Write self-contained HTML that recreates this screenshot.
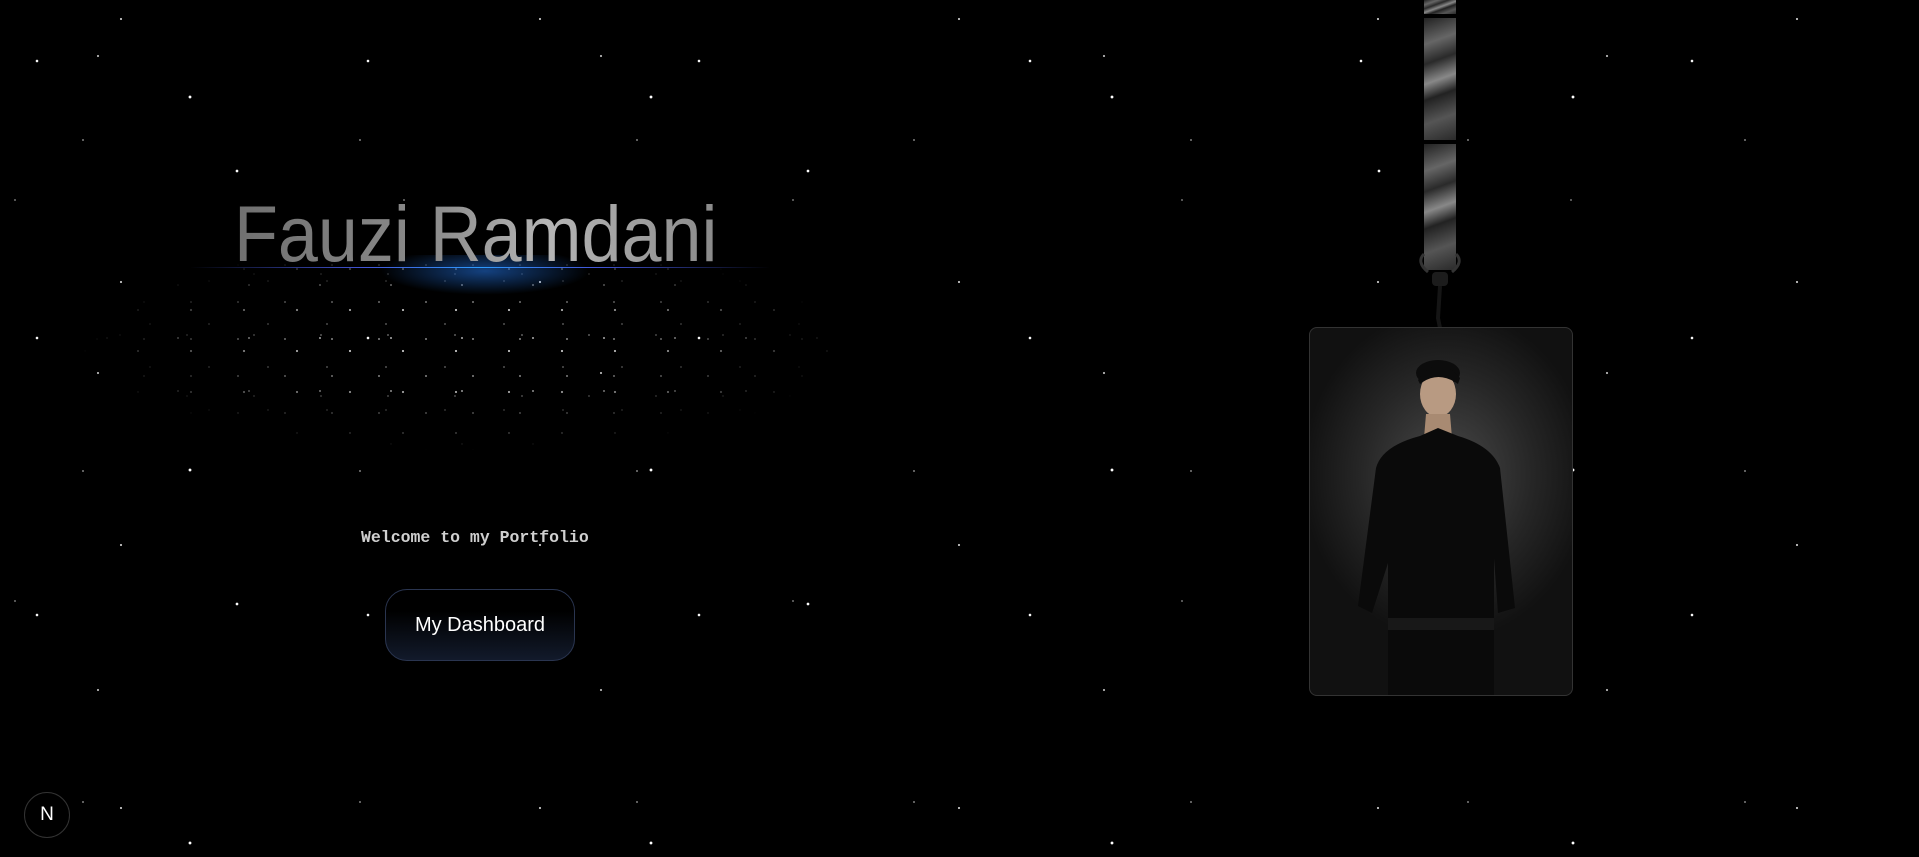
<!DOCTYPE html>
<html><head><meta charset="utf-8"><style>
html,body{margin:0;padding:0;width:1919px;height:857px;background:#000;overflow:hidden;position:relative;font-family:"Liberation Sans",sans-serif}
.stars{position:absolute;inset:0;
background-image:
radial-gradient(1.6px 1.6px at 37px 61px,#fff 60%,transparent),
radial-gradient(1.3px 1.3px at 121px 19px,#ccc 60%,transparent),
radial-gradient(1.1px 1.1px at 83px 140px,#999 60%,transparent),
radial-gradient(1.8px 1.8px at 190px 97px,#fff 60%,transparent),
radial-gradient(1.1px 1.1px at 15px 200px,#888 60%,transparent);
background-size:331px 277px,419px 263px,277px 331px,461px 373px,389px 401px;}
.stars2{position:absolute;inset:0;
background-image:
radial-gradient(1.3px 1.3px at 57px 33px,#bbb 60%,transparent),
radial-gradient(1.7px 1.7px at 140px 120px,#fff 60%,transparent);
background-size:503px 317px,571px 433px;background-position:41px 23px,97px 51px}
.cloud{position:absolute;left:80px;top:262px;width:770px;height:210px;
background-image:
radial-gradient(1.3px 1.3px at 5px 7px,#fff 60%,transparent),
radial-gradient(1.1px 1.1px at 17px 3px,#ccc 60%,transparent),
radial-gradient(1px 1px at 11px 19px,#999 60%,transparent),
radial-gradient(1.2px 1.2px at 27px 23px,#ddd 60%,transparent),
radial-gradient(1px 1px at 40px 12px,#aaa 60%,transparent);
background-size:53px 41px,47px 37px,59px 43px,71px 53px,67px 61px;
-webkit-mask-image:radial-gradient(ellipse 50% 50% at 50% 40%,#000 35%,transparent 100%);
mask-image:radial-gradient(ellipse 50% 50% at 50% 40%,#000 35%,transparent 100%);opacity:.8}
.title{position:absolute;left:234px;top:188px;font-size:79px;white-space:nowrap;transform:scaleX(.91);transform-origin:left top;
background:linear-gradient(90deg,#707070 0%,#8a8a8a 40%,#b5b5b5 65%,#8a8a8a 100%);-webkit-background-clip:text;background-clip:text;-webkit-text-fill-color:transparent}
.line{position:absolute;left:190px;top:267px;width:580px;height:1px;background:linear-gradient(90deg,transparent,#4355d8 30%,#2d9bff 50%,#4355d8 70%,transparent)}
.glow{position:absolute;left:380px;top:255px;width:210px;height:40px;background:radial-gradient(ellipse at 50% 40%,rgba(40,130,255,.5),transparent 70%)}
.welcome{position:absolute;left:361px;top:528px;font-family:"Liberation Mono",monospace;font-weight:bold;font-size:16.5px;color:#cfcfcf}
.btn{position:absolute;left:385px;top:589px;width:188px;height:70px;border:1px solid #2a3550;border-radius:22px;background:linear-gradient(180deg,#000 30%,#121a2b 100%);color:#fff;font-size:20px;display:flex;align-items:center;justify-content:center}
.n{position:absolute;left:24px;top:792px;width:44px;height:44px;border-radius:50%;border:1.5px solid #333;background:#000;color:#fff;display:flex;align-items:center;justify-content:center;font-size:19px}
.strap{position:absolute;left:1424px;width:32px;background:linear-gradient(160deg,#222 0%,#666 20%,#2a2a2a 35%,#888 50%,#222 62%,#555 80%,#2a2a2a 100%)}
.card{position:absolute;left:1309px;top:327px;width:262px;height:367px;border-radius:8px;border:1px solid #333;overflow:hidden;
background:radial-gradient(ellipse 55% 45% at 52% 40%,#4a4a4a 0%,#262626 60%,#111 100%)}
</style></head><body>
<div class="stars"></div><div class="stars2"></div>
<div class="cloud"></div>
<div class="glow"></div>
<div class="title">Fauzi Ramdani</div>
<div class="line"></div>
<div class="welcome">Welcome to my Portfolio</div>
<div class="btn">My Dashboard</div>
<div class="n">N</div>
<div class="strap" style="top:0;height:14px"></div>
<div class="strap" style="top:18px;height:122px"></div>
<div class="strap" style="top:144px;height:126px"></div>
<svg style="position:absolute;left:1410px;top:248px" width="60" height="120">
<path d="M18 24 Q6 14 14 6 M42 24 Q54 14 46 6" stroke="#333" stroke-width="3" fill="none"/>
<rect x="22" y="24" width="16" height="14" rx="4" fill="#1c1c1c"/>
<path d="M30 38 L28 70 L34 100" stroke="#151515" stroke-width="4" fill="none"/>
</svg>
<div class="card">
<svg width="262" height="367" viewBox="0 0 262 367">
<ellipse cx="128" cy="45" rx="22" ry="13" fill="#0c0c0c"/>
<ellipse cx="128" cy="66" rx="18" ry="23" fill="#b89a82"/>
<path d="M108 52 Q128 24 150 50 L148 56 Q128 42 110 56Z" fill="#0c0c0c"/>
<path d="M116 86 L140 86 L142 110 L114 110Z" fill="#a88a72"/>
<path d="M66 140 Q72 118 110 108 L128 100 L148 108 Q182 118 190 140 L205 280 L188 285 L184 230 L184 367 L78 367 L78 235 L62 285 L48 278 Z" fill="#0a0a0a"/>
<rect x="78" y="290" width="106" height="12" fill="#181818"/>
</svg>
</div>
</body></html>
